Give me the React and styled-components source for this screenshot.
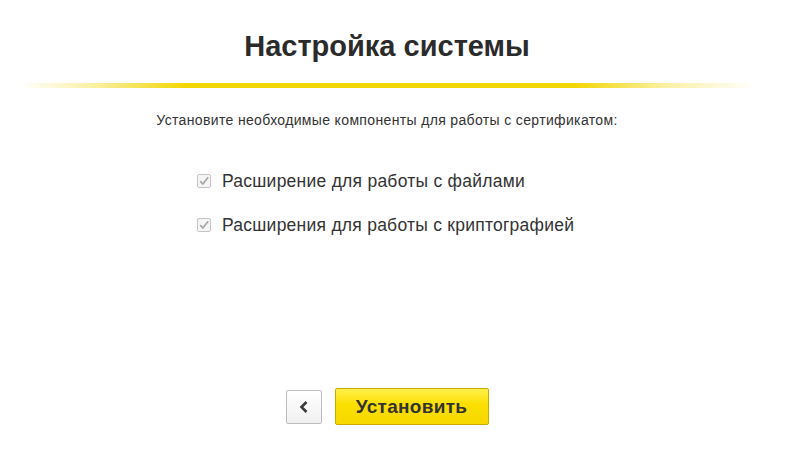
import React from "react";
import styled, { createGlobalStyle } from "styled-components";

const GlobalStyle = createGlobalStyle`
  html, body {
    margin: 0;
    padding: 0;
    background: #fff;
  }
  body {
    font-family: "Liberation Sans", Arial, sans-serif;
    color: #333;
  }
`;

const Page = styled.div`
  width: 774px;
  height: 459px;
  display: flex;
  flex-direction: column;
  align-items: center;
`;

const Title = styled.h1`
  margin: 29px 0 0;
  font-size: 29px;
  line-height: 34px;
  font-weight: bold;
  color: #2b2b2b;
`;

const Divider = styled.div`
  align-self: flex-start;
  margin: 20px 0 0 18px;
  width: 738px;
  height: 5px;
  background: linear-gradient(
    to right,
    rgba(242, 214, 0, 0) 0%,
    rgba(242, 214, 0, 0.35) 10%,
    #f2d600 23%,
    #f2d600 75%,
    rgba(242, 214, 0, 0.35) 88%,
    rgba(242, 214, 0, 0) 100%
  );
`;

const Subtitle = styled.p`
  margin: 24px 0 0;
  font-size: 14px;
  line-height: 17px;
  letter-spacing: 0.35px;
  color: #333;
`;

const Options = styled.div`
  margin: 42px 0 0;
  display: flex;
  flex-direction: column;
  gap: 24px;
  align-self: flex-start;
  padding-left: 197px;
`;

const Option = styled.label`
  display: flex;
  align-items: center;
  gap: 11px;
  font-size: 17.5px;
  line-height: 20px;
  letter-spacing: 0.25px;
  color: #333;
`;

const Box = styled.span`
  width: 14px;
  height: 14px;
  box-sizing: border-box;
  border: 1px solid #c4c4c4;
  border-radius: 2px;
  background: #f5f5f5;
  display: flex;
  align-items: center;
  justify-content: center;
`;

const Spacer = styled.div`
  flex: 1;
`;

const Actions = styled.div`
  display: flex;
  align-items: center;
  gap: 13px;
  margin-bottom: 34px;
`;

const BackButton = styled.button`
  width: 36px;
  height: 34px;
  box-sizing: border-box;
  border: 1px solid #bdbdbd;
  border-radius: 2px;
  background: linear-gradient(#ffffff, #f0f0f0);
  display: flex;
  align-items: center;
  justify-content: center;
  padding: 0;
`;

const PrimaryButton = styled.button`
  width: 154px;
  height: 37px;
  box-sizing: border-box;
  border: 1px solid #c6ac00;
  border-radius: 2px;
  background: linear-gradient(#fff04a, #fbdf00 45%, #f7d800);
  font-family: "Liberation Sans", Arial, sans-serif;
  font-size: 19px;
  letter-spacing: 0.3px;
  font-weight: bold;
  color: #333;
  padding: 0;
`;

const Check = () => (
  <svg width="12" height="12" viewBox="0 0 12 12">
    <path d="M2.2 6.2 L4.8 9 L10.2 2.2" fill="none" stroke="#a6a6a6" strokeWidth="1.7" />
  </svg>
);

const Chevron = () => (
  <svg width="12" height="14" viewBox="0 0 12 14">
    <path d="M8.5 2 L3.5 7 L8.5 12" fill="none" stroke="#3a3a3a" strokeWidth="2.6" />
  </svg>
);

const options = [
  "Расширение для работы с файлами",
  "Расширения для работы с криптографией",
];

export default function App() {
  return (
    <>
      <GlobalStyle />
      <Page>
        <Title>Настройка системы</Title>
        <Divider />
        <Subtitle>Установите необходимые компоненты для работы с сертификатом:</Subtitle>
        <Options>
          {options.map((text) => (
            <Option key={text}>
              <Box>
                <Check />
              </Box>
              {text}
            </Option>
          ))}
        </Options>
        <Spacer />
        <Actions>
          <BackButton>
            <Chevron />
          </BackButton>
          <PrimaryButton>Установить</PrimaryButton>
        </Actions>
      </Page>
    </>
  );
}
